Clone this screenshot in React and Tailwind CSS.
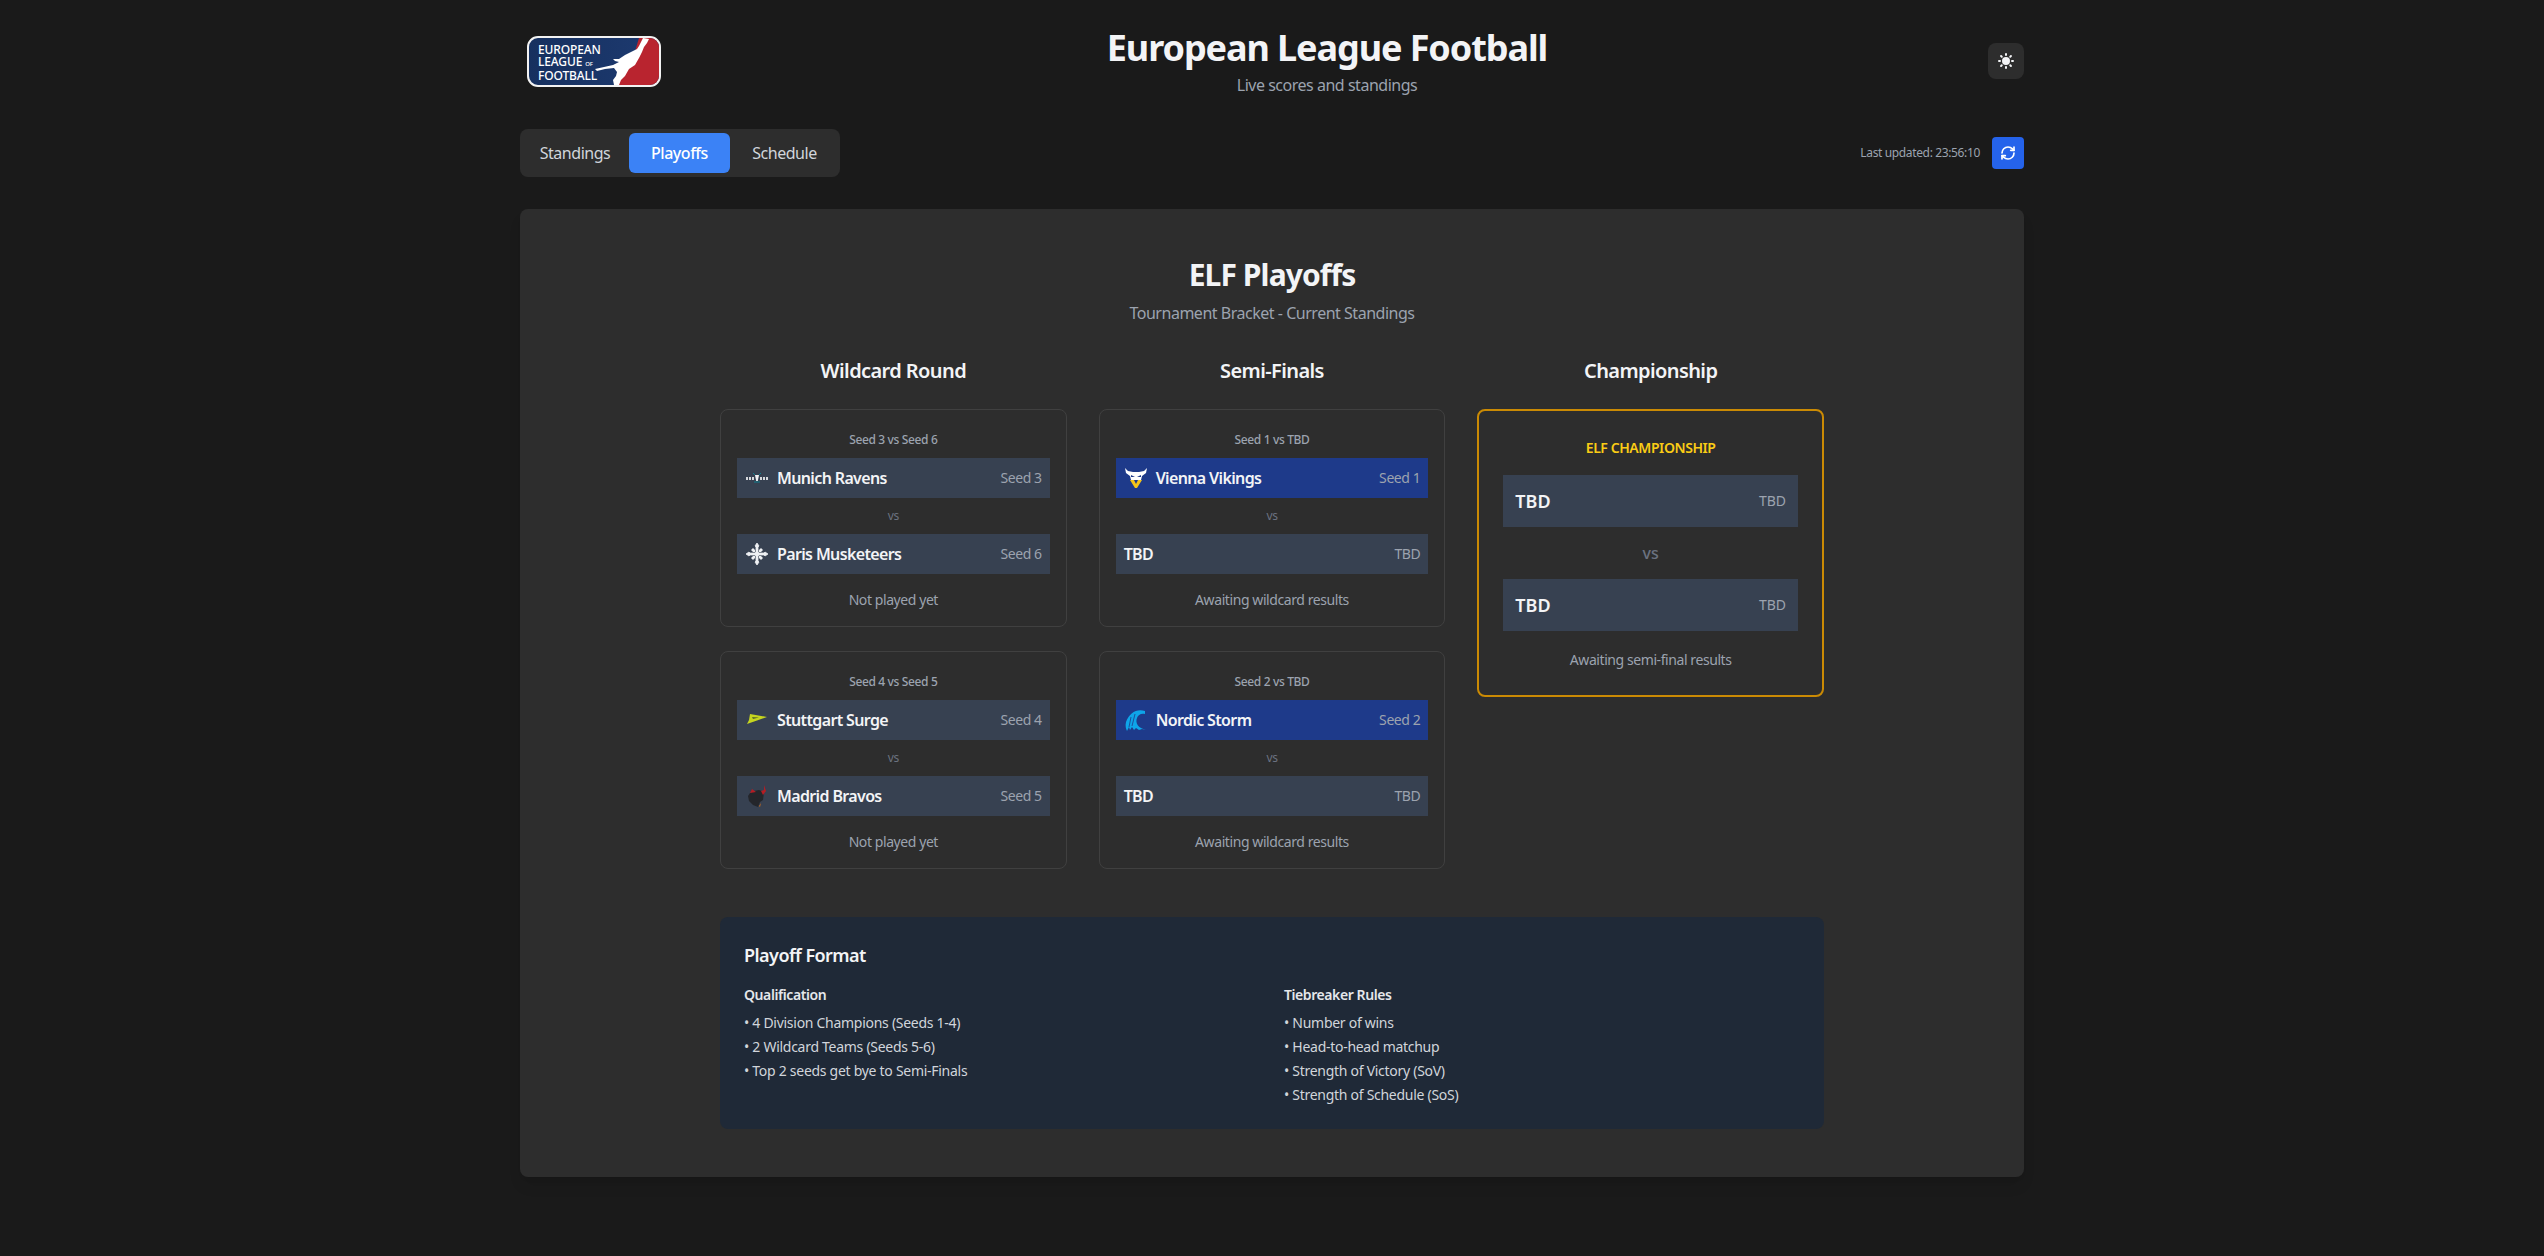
import { RefreshCw } from 'lucide-react';
import { HiSun } from 'react-icons/hi';

const LeagueLogo = () => (
    <div className="relative w-[134px] h-[51px] rounded-[11px] border-2 border-[#f2f2f2] overflow-hidden bg-gradient-to-r from-[#16305f] to-[#1d3a70]">
        <svg viewBox="0 0 130 47" className="absolute inset-0 w-full h-full">
            <path d="M110 0 H130 V47 H88 L104 20 Z" fill="#b9242f" />
            <path d="M114 0 L120 1 L118 5 L115 9 L113 14 L110 20 L106 27 L100 31 L96 38 L92 42 L90 47 L85 47 L84 42 L87 38 L88 34 L85 30 L76 31 L68 33 L66 31 L75 29 L84 27 L90 24 L86 23 L84 21 L90 21 L96 17 L100 15 L104 13 L108 11 L110 8 Z" fill="#ffffff" />
        </svg>
        <div className="absolute left-[9px] top-[6px] text-white text-[12px] leading-[12px] font-medium font-['Noto_Sans',sans-serif] tracking-[-0.01em]">
            <div>EUROPEAN</div>
            <div>LEAGUE <span className="text-[6px]">OF</span></div>
            <div>FOOTBALL</div>
        </div>
    </div>
);

const RavensLogo = () => (
    <svg viewBox="0 0 24 24" className="w-6 h-6 shrink-0">
        <path d="M8 7 L10 9 M16 7 L14 9" stroke="#0f7f8f" strokeWidth="1" fill="none" />
        <path d="M1 11h2v3H1z M4 11h2v3H4z M7 11h2v3H7z M15 11h2v3h-2z M18 11h2v3h-2z M21 11h2v3h-2z" fill="#d5d8dc" />
        <path d="M10 9 H14 L12.8 15 H11.2 Z" fill="#eef0f2" />
        <path d="M9 16h6" stroke="#0f7f8f" strokeWidth="1" />
    </svg>
);

const MusketeersLogo = () => (
    <svg viewBox="0 0 24 24" className="w-6 h-6 shrink-0">
        <path d="M12 1 L14 4 L13 5 V10 L14 11 H19 L20 10 L23 12 L20 14 L19 13 H14 L13 14 V19 L14 20 L12 23 L10 20 L11 19 V14 L10 13 H5 L4 14 L1 12 L4 10 L5 11 H10 L11 10 V5 L10 4 Z" fill="#eef0f3" stroke="#eef0f3" strokeWidth="0.8" />
        <path d="M6 8 L8 6 L10 8 V10 H8 Z M18 8 L16 6 L14 8 V10 H16 Z M6 16 L8 18 L10 16 V14 H8 Z M18 16 L16 18 L14 16 V14 H16 Z" fill="#eef0f3" />
    </svg>
);

const SurgeLogo = () => (
    <svg viewBox="0 0 24 24" className="w-6 h-6 shrink-0">
        <path d="M5 6 L22 9 L12 12.5 L2 16 L4 12 Z" fill="#c6d51f" />
        <path d="M7 9 L14 9.5 L8 11 Z" fill="#5d6a2a" />
    </svg>
);

const BravosLogo = () => (
    <svg viewBox="0 0 24 24" className="w-6 h-6 shrink-0">
        <path d="M9 7 L14 6 L19 8 L18 16 L15 18 L13 23 L8 21 L4 17 L3 12 L5 9 Z" fill="#24262b" />
        <path d="M5 9 L7 5 L11 8 Z M16 7 L19 6 L19 1 L21 7 L18 11 Z" fill="#b41d24" />
        <path d="M14 22 L16 19 L15 23 Z" fill="#c56a1c" />
    </svg>
);

const VikingsLogo = () => (
    <svg viewBox="0 0 24 24" className="w-6 h-6 shrink-0">
        <path d="M1 2 L4 5 L9 6 H15 L20 5 L23 2 L22 7 L18 10 L17 14 H7 L6 10 L2 7 Z" fill="#ffffff" />
        <path d="M7 9 L11 11 L7 11 Z M17 9 L13 11 L17 11 Z" fill="#1e3a8a" />
        <path d="M6 14 L10 14 L12 18 L14 14 L18 14 L13 22 H11 Z" fill="#f5c518" />
    </svg>
);

const StormLogo = () => (
    <svg viewBox="0 0 24 24" className="w-6 h-6 shrink-0">
        <path d="M21 3 C13 0 5 5 2 14 C1 18 2 21 3 23 L5 19 L6 22 L8 19 L10 22 L12 20 L15 22 L18 21 L22 22 C14 20 11 15 13 10 C14 7 17 5 21 6 Z" fill="#0ea5e9" />
        <path d="M7 9 L5 19 M11 6 L8 18" stroke="#1e3a8a" strokeWidth="0.8" fill="none" />
    </svg>
);

const TeamRow = ({ name, seed, logo, highlight }) => (
    <div className={`flex items-center justify-between h-10 p-2 ${highlight ? 'bg-[#1e3a8a]' : 'bg-[#374151]'}`}>
        <div className="flex items-center gap-2">
            {logo}
            <span className="font-semibold text-base tracking-[-0.04em] text-[#f3f4f6]">{name}</span>
        </div>
        <span className="text-sm tracking-[-0.03em] text-[#9ca3af]">{seed}</span>
    </div>
);

const MatchCard = ({ label, top, bottom, status }) => (
    <div className="border border-[#404040] rounded-lg p-4 h-[218px]">
        <div className="text-xs leading-4 tracking-[-0.03em] text-center text-[#9ca3af] font-medium h-8 pt-[6px]">{label}</div>
        <TeamRow {...top} />
        <div className="text-xs tracking-[-0.03em] text-center text-[#6b7280] h-9 leading-9">vs</div>
        <TeamRow {...bottom} />
        <div className="text-sm tracking-[-0.03em] text-center text-[#9ca3af] mt-4">{status}</div>
    </div>
);

const ChampRow = () => (
    <div className="flex items-center justify-between h-[52px] px-3 bg-[#374151]">
        <span className="font-semibold text-lg text-[#f3f4f6]">TBD</span>
        <span className="text-sm text-[#9ca3af]">TBD</span>
    </div>
);

const tbd = { name: 'TBD', seed: 'TBD' };

export default function App() {
    return (
        <div className="min-h-[1256px] bg-[#1a1a1a] text-[#f3f4f6] font-['Noto_Sans',sans-serif]">
            <div className="max-w-[1536px] mx-auto px-4">
                <header className="flex items-center justify-between h-[129px] pb-[7px]">
                    <div className="pl-[7px] w-[310px]"><LeagueLogo /></div>
                    <div className="text-center pt-[3px]">
                        <h1 className="text-4xl font-bold tracking-[-0.03em] text-[#f3f4f6] leading-10">European League Football</h1>
                        <p className="text-base tracking-[-0.03em] text-[#9ca3af] mt-[5px]">Live scores and standings</p>
                    </div>
                    <div className="w-[200px] flex justify-end">
                        <button className="w-9 h-9 rounded-lg bg-[#2d2d2d] flex items-center justify-center text-[#f3f4f6]">
                            <HiSun size={20} />
                        </button>
                    </div>
                </header>

                <div className="flex items-center justify-between mb-8">
                    <div className="flex items-center h-12 p-1 rounded-lg bg-[#2d2d2d]">
                        <button className="h-10 w-[105px] pr-[3px] text-base tracking-[-0.03em] text-[#d1d5db]">Standings</button>
                        <button className="h-10 w-[101px] rounded-md bg-[#3b82f6] text-white text-base tracking-[-0.03em] font-medium">Playoffs</button>
                        <button className="h-10 w-[106px] pl-[3px] text-base tracking-[-0.03em] text-[#d1d5db]">Schedule</button>
                    </div>
                    <div className="flex items-center gap-3">
                        <span className="text-xs tracking-[-0.03em] text-[#9ca3af]">Last updated: 23:56:10</span>
                        <button className="w-8 h-8 rounded bg-[#2563eb] flex items-center justify-center text-white">
                            <RefreshCw size={16} strokeWidth={2.5} />
                        </button>
                    </div>
                </div>

                <main className="rounded-lg bg-[#2d2d2d] shadow-lg px-6 pt-12 pb-12">
                    <div className="max-w-[1104px] mx-auto">
                        <div className="text-center mb-8">
                            <h2 className="text-3xl font-bold tracking-[-0.03em] text-[#f3f4f6] leading-9">ELF Playoffs</h2>
                            <p className="text-base tracking-[-0.03em] text-[#9ca3af] mt-2">Tournament Bracket - Current Standings</p>
                        </div>

                        <div className="grid grid-cols-3 gap-8">
                            <div>
                                <h3 className="text-xl font-semibold tracking-[-0.03em] text-center text-[#f3f4f6] mb-6">Wildcard Round</h3>
                                <div className="flex flex-col gap-6">
                                    <MatchCard
                                        label="Seed 3 vs Seed 6"
                                        top={{ name: 'Munich Ravens', seed: 'Seed 3', logo: <RavensLogo /> }}
                                        bottom={{ name: 'Paris Musketeers', seed: 'Seed 6', logo: <MusketeersLogo /> }}
                                        status="Not played yet"
                                    />
                                    <MatchCard
                                        label="Seed 4 vs Seed 5"
                                        top={{ name: 'Stuttgart Surge', seed: 'Seed 4', logo: <SurgeLogo /> }}
                                        bottom={{ name: 'Madrid Bravos', seed: 'Seed 5', logo: <BravosLogo /> }}
                                        status="Not played yet"
                                    />
                                </div>
                            </div>

                            <div>
                                <h3 className="text-xl font-semibold tracking-[-0.03em] text-center text-[#f3f4f6] mb-6">Semi-Finals</h3>
                                <div className="flex flex-col gap-6">
                                    <MatchCard
                                        label="Seed 1 vs TBD"
                                        top={{ name: 'Vienna Vikings', seed: 'Seed 1', logo: <VikingsLogo />, highlight: true }}
                                        bottom={tbd}
                                        status="Awaiting wildcard results"
                                    />
                                    <MatchCard
                                        label="Seed 2 vs TBD"
                                        top={{ name: 'Nordic Storm', seed: 'Seed 2', logo: <StormLogo />, highlight: true }}
                                        bottom={tbd}
                                        status="Awaiting wildcard results"
                                    />
                                </div>
                            </div>

                            <div>
                                <h3 className="text-xl font-semibold tracking-[-0.03em] text-center text-[#f3f4f6] mb-6">Championship</h3>
                                <div className="border-2 border-[#ca8a04] rounded-lg p-6 h-[288px]">
                                    <div className="text-sm font-semibold tracking-[-0.03em] text-center text-[#facc15] h-10 pt-[3px]">ELF CHAMPIONSHIP</div>
                                    <ChampRow />
                                    <div className="text-base text-center font-medium text-[#6b7280] h-[52px] leading-[52px]">vs</div>
                                    <ChampRow />
                                    <div className="text-sm tracking-[-0.03em] text-center text-[#9ca3af] mt-[19px]">Awaiting semi-final results</div>
                                </div>
                            </div>
                        </div>

                        <div className="mt-12 rounded-lg bg-[#1f2937] p-6 h-[212px]">
                            <h4 className="text-lg font-semibold tracking-[-0.03em] text-[#f3f4f6] mb-4">Playoff Format</h4>
                            <div className="grid grid-cols-2 gap-6">
                                <div>
                                    <div className="text-sm font-semibold tracking-[-0.03em] text-[#e5e7eb] mb-[6px]">Qualification</div>
                                    <ul className="text-sm tracking-[-0.02em] text-[#d1d5db] leading-6">
                                        <li>• 4 Division Champions (Seeds 1-4)</li>
                                        <li>• 2 Wildcard Teams (Seeds 5-6)</li>
                                        <li>• Top 2 seeds get bye to Semi-Finals</li>
                                    </ul>
                                </div>
                                <div>
                                    <div className="text-sm font-semibold tracking-[-0.03em] text-[#e5e7eb] mb-[6px]">Tiebreaker Rules</div>
                                    <ul className="text-sm tracking-[-0.02em] text-[#d1d5db] leading-6">
                                        <li>• Number of wins</li>
                                        <li>• Head-to-head matchup</li>
                                        <li>• Strength of Victory (SoV)</li>
                                        <li>• Strength of Schedule (SoS)</li>
                                    </ul>
                                </div>
                            </div>
                        </div>
                    </div>
                </main>
            </div>
        </div>
    );
}
